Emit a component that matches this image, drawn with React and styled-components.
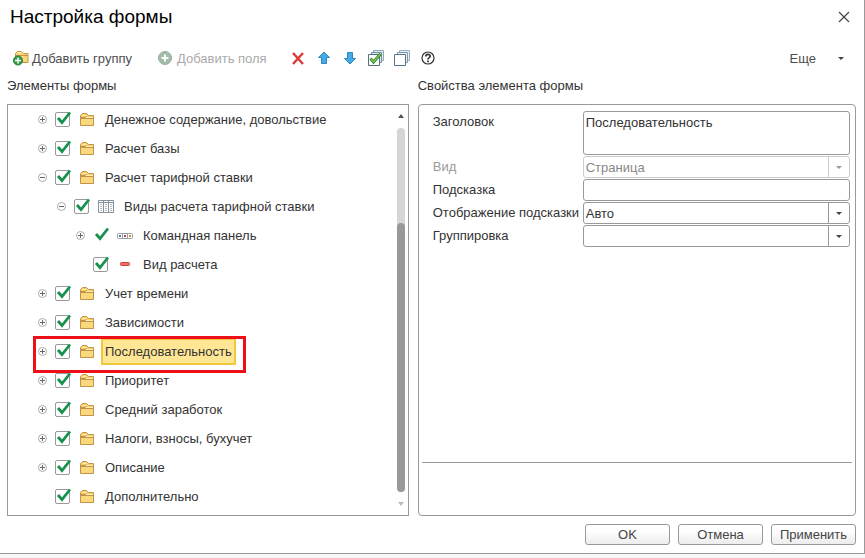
import React from "react";
import styled, { createGlobalStyle } from "styled-components";

const treeItems = [
  { title: "Денежное содержание, довольствие", level: 0, toggle: "plus", icon: "folder" },
  { title: "Расчет базы", level: 0, toggle: "plus", icon: "folder" },
  { title: "Расчет тарифной ставки", level: 0, toggle: "minus", icon: "folder" },
  { title: "Виды расчета тарифной ставки", level: 1, toggle: "minus", icon: "table" },
  { title: "Командная панель", level: 2, toggle: "plus", icon: "commands", bare: true },
  { title: "Вид расчета", level: 2, icon: "field" },
  { title: "Учет времени", level: 0, toggle: "plus", icon: "folder" },
  { title: "Зависимости", level: 0, toggle: "plus", icon: "folder" },
  { title: "Последовательность", level: 0, toggle: "plus", icon: "folder", selected: true },
  { title: "Приоритет", level: 0, toggle: "plus", icon: "folder" },
  { title: "Средний заработок", level: 0, toggle: "plus", icon: "folder" },
  { title: "Налоги, взносы, бухучет", level: 0, toggle: "plus", icon: "folder" },
  { title: "Описание", level: 0, toggle: "plus", icon: "folder" },
  { title: "Дополнительно", level: 0, icon: "folder" },
];

const FolderIcon = () => (
  <svg width="16" height="16" viewBox="0 0 16 16" fill="none">
    <path d="M1.5 13.5V3.5L3.5 1.5H7.5L9.500 3.5H14.500V13.500z" fill="#f7d06a" stroke="#c4924a" />
    <path d="M3.500 3.500h4M2 5.500h12" stroke="#fdeeb5" />
    <path d="M1.500 5.500H6L7.500 4.500M1.500 6.500h13" stroke="#c4924a" />
    <path d="M2 7h12v6H2z" fill="#fad87c" />
  </svg>
);

const AddGroupIcon = () => (
  <svg width="16" height="16" viewBox="0 0 16 16" fill="none">
    <path d="M2.5 12.5v-9l2-2h4l2 2h4.500v9z" fill="#fad878" stroke="#c4924a" />
    <path d="M2.5 5.5h12.500" stroke="#c4924a" />
    <path d="M4.500 2.500h4" stroke="#fff0b8" />
    <circle cx="5" cy="10.500" r="4.500" fill="#35994a" stroke="#23803a" />
    <path d="M5 7.500v6M2 10.500h6" stroke="#fff" strokeWidth="1.500" />
  </svg>
);

const AddFieldIcon = () => (
  <svg width="16" height="16" viewBox="0 0 16 16" fill="none">
    <circle cx="7" cy="8" r="6.500" fill="#a3bba9" stroke="#98b09e" />
    <path d="M7 4.500v7M3.500 8h7" stroke="#fff" strokeWidth="2" />
  </svg>
);

const DeleteIcon = () => (
  <svg width="16" height="16" viewBox="0 0 16 16" fill="none">
    <path d="M3 3l10 11M13 3L3 14" stroke="#d93a38" strokeWidth="2.400" />
  </svg>
);

const ArrowIcon = ({ down }) => (
  <svg width="16" height="16" viewBox="0 0 16 16">
    <path
      d={down ? "M8 14L2.500 8.500h3v-6h5v6h3z" : "M8 2L2.500 7.500h3v6h5v-6h3z"}
      fill="#45abe8"
      stroke="#2f86bb"
    />
  </svg>
);

const CheckAllIcon = () => (
  <svg width="16" height="16" viewBox="0 0 16 16" fill="none">
    <path d="M5.500 .500h10v10h-10z" fill="#dce9ee" stroke="#93a9b5" />
    <path d="M3.500 2.500h10v10h-10z" fill="#dce9ee" stroke="#7591a0" />
    <path d="M.500 4.500h11v11h-11z" fill="#fff" stroke="#557181" />
    <path d="M2.500 8.500l3 3.500L12.500 4" stroke="#2f7e2a" strokeWidth="3" />
    <path d="M2.800 8.800l2.700 3L12 4.500" stroke="#7cc94c" strokeWidth="1.500" />
  </svg>
);

const UncheckAllIcon = () => (
  <svg width="16" height="16" viewBox="0 0 16 16" fill="none">
    <path d="M5.500 .500h10v10h-10z" fill="#e6eef3" stroke="#9db0bf" />
    <path d="M3.500 2.500h10v10h-10z" fill="#e6eef3" stroke="#8299ab" />
    <path d="M.500 4.500h11v11h-11z" fill="#fff" stroke="#5b7385" />
  </svg>
);

const HelpIcon = () => (
  <svg width="16" height="16" viewBox="0 0 16 16" fill="none" stroke="#333">
    <circle cx="8" cy="8" r="6" strokeWidth="1.200" />
    <path d="M5.800 6.600C5.800 3.600 10.300 3.800 10.200 6.300C10.200 7.700 8 7.700 8 9.500" strokeWidth="1.700" />
    <path d="M8 10.500v1.700" strokeWidth="1.800" />
  </svg>
);

const CloseIcon = () => (
  <svg width="12" height="12" viewBox="0 0 12 12" fill="none">
    <path d="M1 1l10 10M11 1L1 11" stroke="#444" strokeWidth="1.200" />
  </svg>
);

const TableIcon = () => (
  <svg width="16" height="16" viewBox="0 0 16 16" fill="none">
    <path d="M.500 1.500h15v12h-15z" fill="#fff" stroke="#84919b" />
    <path d="M1 3.500h14M5.500 2v11M10.500 2v11" stroke="#84919b" />
    <path d="M2 5.500h12M2 7.500h12M2 9.500h12M2 11.500h12" stroke="#b4bcc3" strokeDasharray="2 3" />
  </svg>
);

const CommandsIcon = () => (
  <svg width="16" height="16" viewBox="0 0 16 16" fill="none">
    <rect x=".500" y="5.500" width="15" height="5" rx="1" fill="#fff" stroke="#9aa0a6" />
    <path d="M5.500 5.500v5M10.500 5.500v5" stroke="#9aa0a6" />
    <path d="M2 7h2v2H2z" fill="#4a79a8" />
    <path d="M7 7h2v2H7z" fill="#c8394d" />
    <path d="M12 7h2v2h-2z" fill="#b59a45" />
  </svg>
);

const FieldIcon = () => (
  <svg width="16" height="16" viewBox="0 0 16 16">
    <rect x="3.500" y="5.500" width="9" height="3" rx="1" fill="#ef7466" stroke="#d23d35" />
  </svg>
);

const ToggleIcon = ({ plus }) => (
  <svg width="9" height="9" viewBox="0 0 9 9" fill="none">
    <circle cx="4.500" cy="4.500" r="4" stroke="#aaa" />
    <path d={plus ? "M2 4.500h5M4.500 2v5" : "M2 4.500h5"} stroke="#666" />
  </svg>
);

const CheckMark = () => (
  <svg width="16" height="16" viewBox="0 0 16 16" fill="none">
    <path d="M2 7L6 11.500L14 1.500" stroke="#16914f" strokeWidth="2.800" />
  </svg>
);

const icons = {
  folder: FolderIcon,
  table: TableIcon,
  commands: CommandsIcon,
  field: FieldIcon,
};

function TreeRow({ item }) {
  const Icon = icons[item.icon];
  const id = "item-" + item.title;

  return (
    <Row $level={item.level} $marked={item.selected}>
      <Toggle>
        {item.toggle && (
          <ToggleButton type="button" aria-label={item.title}>
            <ToggleIcon plus={item.toggle === "plus"} />
          </ToggleButton>
        )}
      </Toggle>
      <Check $bare={item.bare}>
        <input type="checkbox" id={id} defaultChecked />
        <CheckMark />
      </Check>
      <Icon />
      <RowTitle htmlFor={id} $selected={item.selected}>
        {item.title}
      </RowTitle>
    </Row>
  );
}

function Combo({ id, value, disabled }) {
  return (
    <ComboBox $disabled={disabled}>
      <select id={id} disabled={disabled}>
        <option>{value}</option>
      </select>
      <ComboArrow>
        <Caret $faded={disabled} />
      </ComboArrow>
    </ComboBox>
  );
}

function App() {
  return (
    <>
      <GlobalStyle />
      <Window>
        <TitleBar>
          <h1>Настройка формы</h1>
          <CloseButton type="button" aria-label="Закрыть">
            <CloseIcon />
          </CloseButton>
        </TitleBar>
        <Toolbar>
          <TextButton type="button">
            <AddGroupIcon />
            Добавить группу
          </TextButton>
          <TextButton type="button" disabled>
            <AddFieldIcon />
            Добавить поля
          </TextButton>
          <ToolIcons>
            <IconButton type="button" aria-label="Удалить"><DeleteIcon /></IconButton>
            <IconButton type="button" aria-label="Вверх"><ArrowIcon /></IconButton>
            <IconButton type="button" aria-label="Вниз"><ArrowIcon down /></IconButton>
            <IconButton type="button" aria-label="Установить все"><CheckAllIcon /></IconButton>
            <IconButton type="button" aria-label="Снять все"><UncheckAllIcon /></IconButton>
            <IconButton type="button" aria-label="Справка"><HelpIcon /></IconButton>
          </ToolIcons>
          <MoreButton type="button">
            Еще
            <Caret />
          </MoreButton>
        </Toolbar>
        <Columns>
          <Column>
            <h2>Элементы формы</h2>
            <TreePanel>
              <Tree>
                {treeItems.map((item) => (
                  <TreeRow key={item.title} item={item} />
                ))}
              </Tree>
              <Scrollbar>
                <ScrollArrow $up />
                <Track>
                  <Thumb />
                </Track>
                <ScrollArrow />
              </Scrollbar>
            </TreePanel>
          </Column>
          <Column>
            <h2>Свойства элемента формы</h2>
            <PropsPanel>
              <Form>
                <label htmlFor="caption">Заголовок</label>
                <TextArea id="caption" defaultValue="Последовательность" />
                <FadedLabel htmlFor="kind">Вид</FadedLabel>
                <Combo id="kind" value="Страница" disabled />
                <label htmlFor="hint">Подсказка</label>
                <TextInput id="hint" type="text" />
                <label htmlFor="hintView">Отображение подсказки</label>
                <Combo id="hintView" value="Авто" />
                <label htmlFor="grouping">Группировка</label>
                <Combo id="grouping" value="" />
              </Form>
              <Description />
            </PropsPanel>
          </Column>
        </Columns>
        <Footer>
          <Button type="button">OK</Button>
          <Button type="button">Отмена</Button>
          <Button type="button">Применить</Button>
        </Footer>
      </Window>
    </>
  );
}

export default App;

const GlobalStyle = createGlobalStyle`
  *, *::before, *::after {
    box-sizing: border-box;
  }
  body {
    margin: 0;
    background: #f7f7f7;
    color: #333;
    font-family: "Liberation Sans", Arial, sans-serif;
    font-size: 13px;
  }
  button, input, select, textarea {
    margin: 0;
    font: inherit;
    color: inherit;
  }
  svg {
    display: block;
    flex-shrink: 0;
  }
`;

const Window = styled.div`
  padding-bottom: 8px;
  background: #fff;
  border-right: 1px solid #999;
  border-bottom: 1px solid #999;
  box-shadow: 0 1px 4px rgba(0, 0, 0, 0.25);
`;

const TitleBar = styled.header`
  display: flex;
  align-items: center;
  justify-content: space-between;
  height: 34px;
  padding: 0 14px 0 10px;

  > h1 {
    margin: 0;
    color: #000;
    font-size: 19px;
    font-weight: normal;
  }
`;

const CloseButton = styled.button`
  padding: 0;
  border: 0;
  background: none;
`;

const Toolbar = styled.div`
  display: flex;
  align-items: center;
  height: 36px;
  margin-top: 6px;
`;

const TextButton = styled.button`
  display: flex;
  align-items: center;
  gap: 3px;
  padding: 0 13px;
  border: 0;
  background: none;
  color: #4d4d4d;
  white-space: nowrap;

  &:disabled {
    color: #aaa;
  }
`;

const ToolIcons = styled.div`
  display: flex;
  margin-left: 5px;
`;

const IconButton = styled.button`
  display: flex;
  align-items: center;
  justify-content: center;
  width: 26px;
  height: 26px;
  padding: 0;
  border: 0;
  background: none;
`;

const MoreButton = styled(TextButton)`
  gap: 22px;
  margin-left: auto;
  padding: 0 20px;
`;

const Caret = styled.span`
  border: 3px solid transparent;
  border-bottom: 0;
  border-top-color: ${(props) => (props.$faded ? "#999" : "#444")};
`;

const Columns = styled.main`
  display: grid;
  grid-template-columns: minmax(0, 11fr) minmax(0, 12fr);
  gap: 9px;
  padding: 0 8px 0 7px;
`;

const Column = styled.section`
  display: flex;
  flex-direction: column;

  > h2 {
    margin: 0 0 8px;
    font-size: 13px;
    font-weight: normal;
    line-height: 20px;
  }
`;

const TreePanel = styled.div`
  display: flex;
  flex: 1;
  border: 1px solid #999;
`;

const Tree = styled.div`
  flex: 1;
  padding-bottom: 4px;
`;

const Row = styled.div`
  position: relative;
  display: flex;
  align-items: center;
  height: 29px;
  padding-left: ${(props) => 30 + props.$level * 19}px;

  ${(props) =>
    props.$marked &&
    `
    &::after {
      content: "";
      position: absolute;
      z-index: 1;
      left: 25px;
      top: -1px;
      width: 213px;
      height: 37px;
      border: 3px solid #ee1018;
      pointer-events: none;
    }
  `}
`;

const Toggle = styled.span`
  width: 17px;
`;

const ToggleButton = styled.button`
  display: block;
  padding: 0;
  border: 0;
  background: none;
`;

const Check = styled.span`
  position: relative;
  width: 15px;
  height: 15px;
  margin-right: 9px;

  > input {
    display: block;
    width: 15px;
    height: 15px;
    appearance: none;
    border: 1px solid ${(props) => (props.$bare ? "transparent" : "#999")};
    border-radius: 2px;
  }
  > svg {
    position: absolute;
    left: 1px;
    top: -1px;
    visibility: hidden;
    pointer-events: none;
  }
  > input:checked + svg {
    visibility: visible;
  }
`;

const RowTitle = styled.label`
  margin-left: 6px;
  padding: 0 2px;
  border: 2px solid ${(props) => (props.$selected ? "#f0c83c" : "transparent")};
  background: ${(props) => (props.$selected ? "#ffe695" : "none")};
  line-height: 23px;
  white-space: nowrap;
`;

const Scrollbar = styled.div`
  display: flex;
  flex-direction: column;
  align-items: center;
  width: 8px;
  margin-right: 3px;
  padding: 9px 0;
`;

const ScrollArrow = styled.span`
  border: 3px solid transparent;
  ${(props) =>
    props.$up
      ? "border-top: 0; border-bottom: 4px solid #555;"
      : "border-bottom: 0; border-top: 4px solid #bbb;"}
`;

const Track = styled.div`
  display: flex;
  flex: 1;
  align-items: flex-end;
  width: 8px;
  margin: 10px 0;
  border-radius: 4px;
  background: #d6d6d6;
`;

const Thumb = styled.div`
  width: 8px;
  height: 74%;
  border-radius: 4px;
  background: #999;
`;

const PropsPanel = styled.div`
  display: flex;
  flex: 1;
  flex-direction: column;
  border: 1px solid #999;
  border-radius: 4px;
`;

const Form = styled.form`
  display: grid;
  flex: 1;
  grid-template-columns: 150px minmax(0, 1fr);
  align-content: start;
  gap: 1px 0;
  padding: 6px 5px 0 14px;

  > label {
    line-height: 22px;
    white-space: nowrap;
  }
`;

const FadedLabel = styled.label`
  color: #999;
`;

const TextInput = styled.input`
  width: 100%;
  height: 22px;
  padding: 0 2px;
  border: 1px solid #999;
  border-radius: 3px;
  background: #fff;
`;

const TextArea = styled.textarea`
  display: block;
  width: 100%;
  height: 44px;
  padding: 3px 2px;
  border: 1px solid #999;
  border-radius: 3px;
  resize: none;
`;

const ComboBox = styled.div`
  position: relative;
  height: 22px;
  border: 1px solid ${(props) => (props.$disabled ? "#ccc" : "#999")};
  border-radius: 3px;

  > select {
    display: block;
    width: 100%;
    height: 20px;
    padding: 0 22px 0 2px;
    appearance: none;
    border: 0;
    background: none;
  }
  > select:disabled {
    color: #888;
    opacity: 1;
  }
  > span {
    border-left-color: ${(props) => (props.$disabled ? "#ccc" : "#999")};
  }
`;

const ComboArrow = styled.span`
  position: absolute;
  top: 0;
  right: 0;
  bottom: 0;
  display: flex;
  align-items: center;
  justify-content: center;
  width: 21px;
  border-left: 1px solid;
  pointer-events: none;
`;

const Description = styled.div`
  height: 53px;
  margin: 0 3px;
  border-top: 1px solid #999;
`;

const Footer = styled.footer`
  display: flex;
  justify-content: flex-end;
  gap: 8px;
  padding: 8px 8px 0;
`;

const Button = styled.button`
  width: 85px;
  height: 21px;
  padding: 0;
  border: 1px solid #999;
  border-radius: 3px;
  background: linear-gradient(#fff 30%, #ececec);
  color: #444;
`;
